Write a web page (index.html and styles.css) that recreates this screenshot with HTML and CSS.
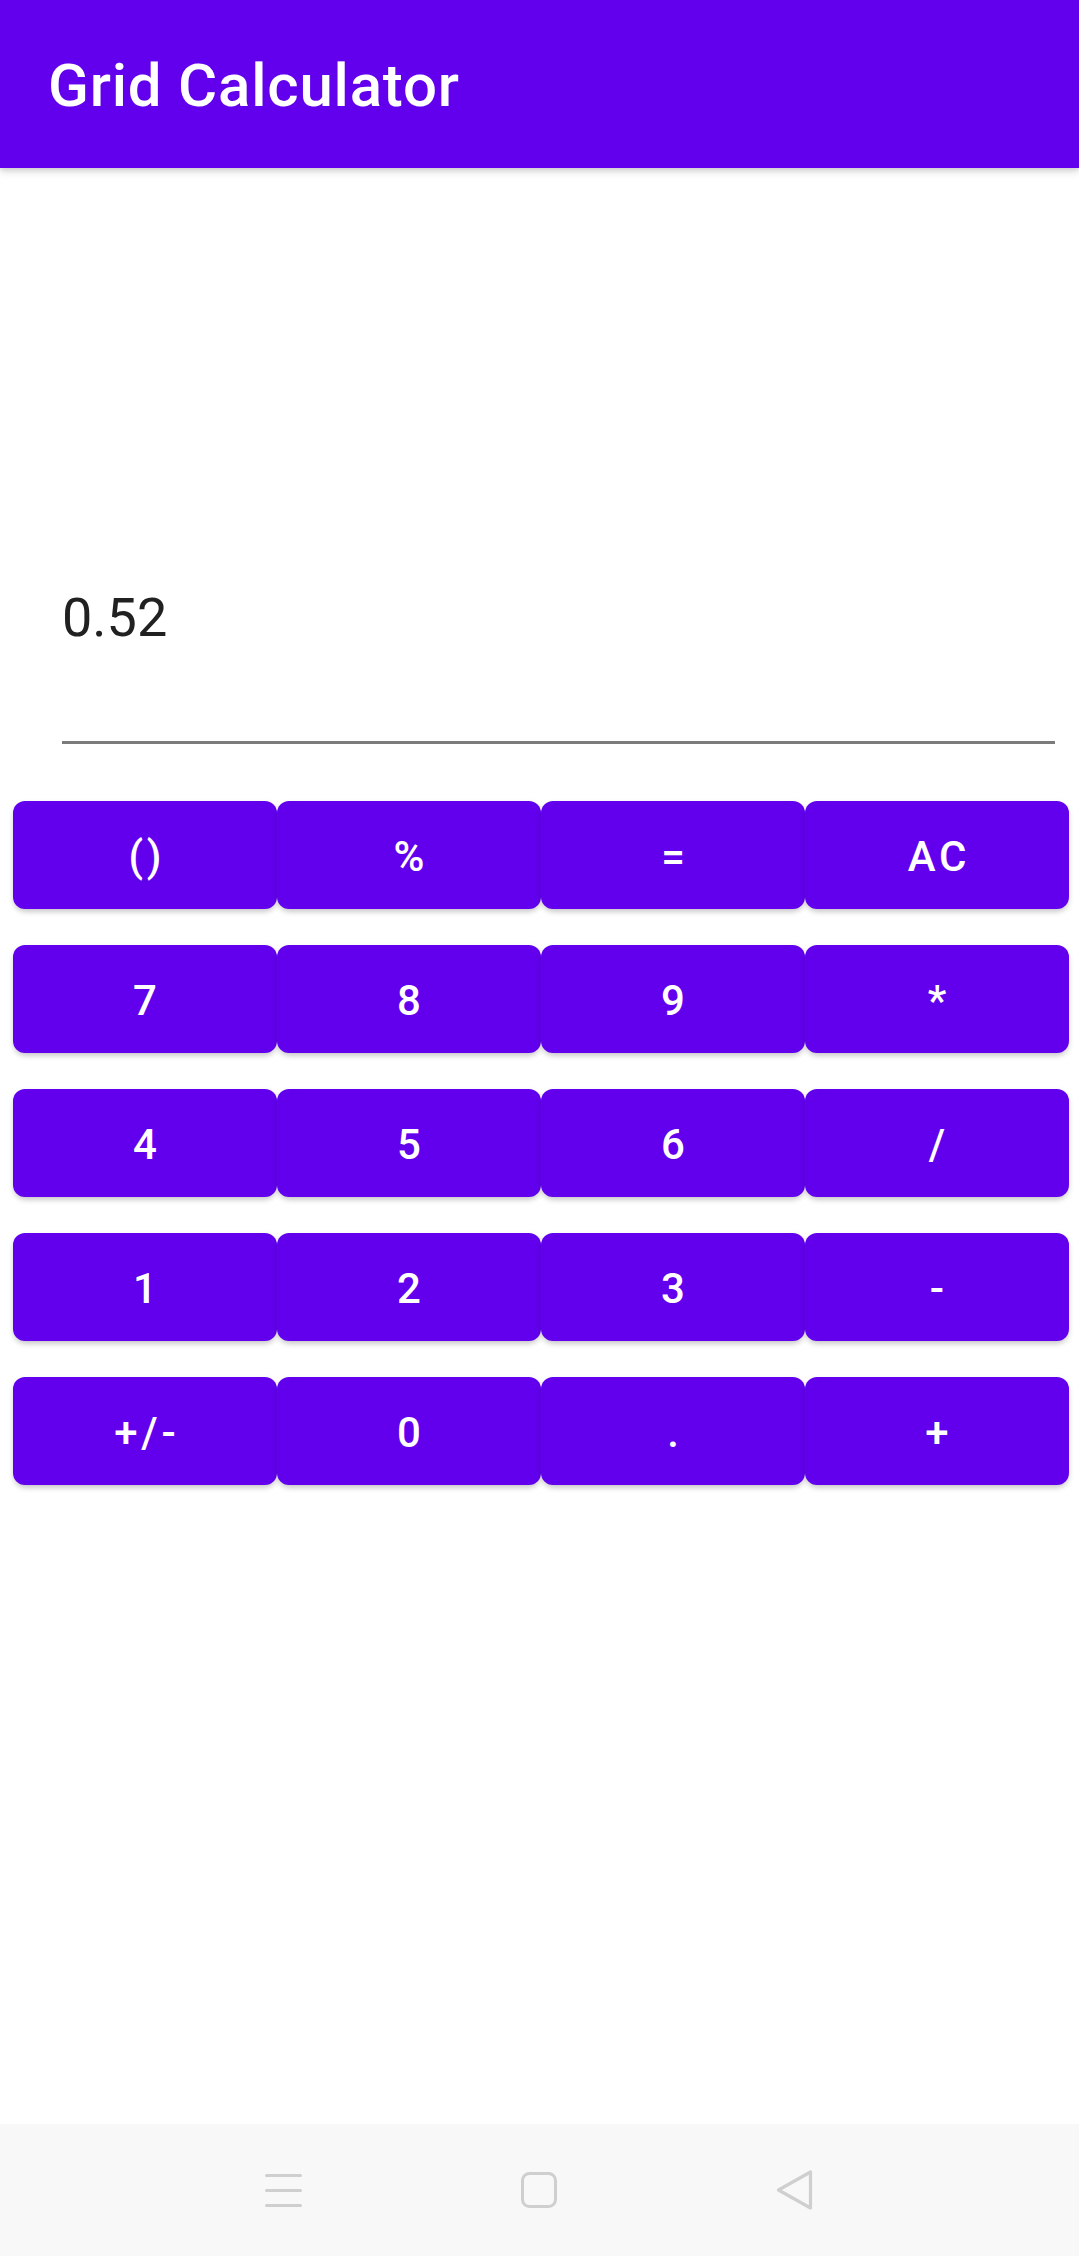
FILE: index.html
```html
<!DOCTYPE html>
<html lang="en">
<head>
<meta charset="utf-8">
<title>Grid Calculator</title>
<link rel="stylesheet" href="styles.css">
</head>
<body>
<div class="app">
  <header class="appbar">
    <h1 class="appbar-title">Grid Calculator</h1>
  </header>
  <main class="content">
    <div class="display">0.52</div>
    <div class="keypad">
      <button class="key">()</button>
      <button class="key">%</button>
      <button class="key">=</button>
      <button class="key">AC</button>
      <button class="key">7</button>
      <button class="key">8</button>
      <button class="key">9</button>
      <button class="key">*</button>
      <button class="key">4</button>
      <button class="key">5</button>
      <button class="key">6</button>
      <button class="key">/</button>
      <button class="key">1</button>
      <button class="key">2</button>
      <button class="key">3</button>
      <button class="key">-</button>
      <button class="key">+/-</button>
      <button class="key">0</button>
      <button class="key">.</button>
      <button class="key">+</button>
    </div>
  </main>
  <nav class="navbar">
    <svg class="nav-icon" width="37" height="36" viewBox="0 0 37 36">
      <path d="M1.5 3.5H35.5M1.5 18.5H35.5M1.5 33.5H35.5" stroke="#cfcfcf" stroke-width="3" stroke-linecap="round" fill="none"/>
    </svg>
    <svg class="nav-icon" width="36" height="36" viewBox="0 0 36 36">
      <rect x="1.5" y="1.5" width="33" height="33" rx="7" stroke="#cfcfcf" stroke-width="3" fill="none"/>
    </svg>
    <svg class="nav-icon" width="38" height="40" viewBox="0 0 38 40">
      <path d="M2.5 20L34.5 2V38Z" stroke="#cfcfcf" stroke-width="3.2" stroke-linejoin="round" fill="none"/>
    </svg>
  </nav>
</div>
</body>
</html>
```

FILE: styles.css
```css
* {
  box-sizing: border-box;
}

html, body {
  margin: 0;
  padding: 0;
  background: #ffffff;
}

body {
  font-family: Roboto, "Noto Sans", "Liberation Sans", sans-serif;
}

.app {
  display: flex;
  flex-direction: column;
  min-height: 100vh;
}

.appbar {
  position: relative;
  z-index: 2;
  height: 168px;
  background: #6200ee;
  display: flex;
  align-items: center;
  padding-left: 48px;
  box-shadow: 0 4px 8px rgba(0, 0, 0, 0.12), 0 2px 4px rgba(0, 0, 0, 0.1);
}

.appbar-title {
  margin: 0;
  color: #ffffff;
  font-size: 60px;
  font-weight: 500;
  line-height: 70px;
  letter-spacing: 0.8px;
  padding-top: 4px;
}

.content {
  flex: 1;
  display: flex;
  flex-direction: column;
}

.display {
  margin: 0 24px 0 62px;
  padding-top: 418px;
  padding-bottom: 91px;
  font-size: 54px;
  line-height: 64px;
  color: #212121;
  border-bottom: 3px solid #7b7b7b;
}

.keypad {
  display: grid;
  grid-template-columns: repeat(4, 264px);
  grid-auto-rows: 108px;
  row-gap: 36px;
  margin-top: 57px;
  padding-left: 13px;
}

.key {
  border: none;
  margin: 0;
  padding: 3px 0 0 3.75px;
  background: #6200ee;
  color: #ffffff;
  border-radius: 12px;
  font-family: Roboto, "Noto Sans", "Liberation Sans", sans-serif;
  font-size: 42px;
  font-weight: 500;
  letter-spacing: 3.75px;
  text-transform: uppercase;
  box-shadow: 0 4px 6px -2px rgba(0, 0, 0, 0.2), 0 2px 6px rgba(0, 0, 0, 0.08);
  display: flex;
  align-items: center;
  justify-content: center;
}

.navbar {
  height: 132px;
  background: #f8f8f8;
  display: flex;
  align-items: center;
  justify-content: center;
  gap: 219px;
}

.nav-icon {
  display: block;
}
```
